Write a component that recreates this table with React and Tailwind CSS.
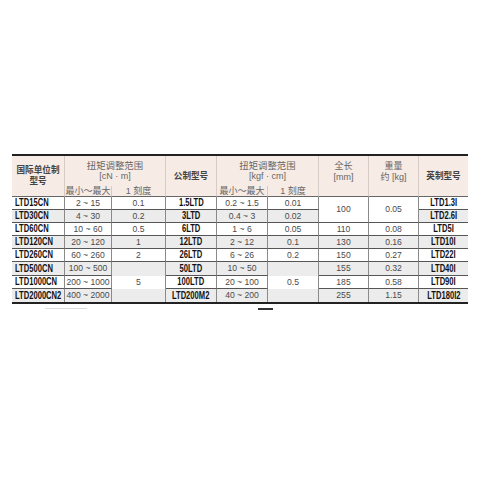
const cols = "grid-cols-[53px_47px_54px_51px_51px_51px_50px_50px_49px]";
const rowsTpl = "grid-rows-[30px_11px_13px_13px_13px_13px_13px_14px_13px_13px]";

const sans = { fontFamily: '"Liberation Sans", Arial, "Noto Sans CJK SC", sans-serif' };

// body data, one per row
const data = [
  { si: "LTD15CN", r1: "2 ~ 15", s1: "0.1", m: "1.5LTD", r2: "0.2 ~ 1.5", s2: "0.01", len: "100", w: "0.05", inch: "LTD1.3I" },
  { si: "LTD30CN", r1: "4 ~ 30", s1: "0.2", m: "3LTD", r2: "0.4 ~ 3", s2: "0.02", inch: "LTD2.6I" },
  { si: "LTD60CN", r1: "10 ~ 60", s1: "0.5", m: "6LTD", r2: "1 ~ 6", s2: "0.05", len: "110", w: "0.08", inch: "LTD5I" },
  { si: "LTD120CN", r1: "20 ~ 120", s1: "1", m: "12LTD", r2: "2 ~ 12", s2: "0.1", len: "130", w: "0.16", inch: "LTD10I" },
  { si: "LTD260CN", r1: "60 ~ 260", s1: "2", m: "26LTD", r2: "6 ~ 26", s2: "0.2", len: "150", w: "0.27", inch: "LTD22I" },
  { si: "LTD500CN", r1: "100 ~ 500", s1: "", m: "50LTD", r2: "10 ~ 50", s2: "", len: "155", w: "0.32", inch: "LTD40I" },
  { si: "LTD1000CN", r1: "200 ~ 1000", s1: "5", m: "100LTD", r2: "20 ~ 100", s2: "0.5", len: "185", w: "0.58", inch: "LTD90I" },
  { si: "LTD2000CN2", r1: "400 ~ 2000", s1: "", m: "LTD200M2", r2: "40 ~ 200", s2: "", len: "255", w: "1.15", inch: "LTD180I2" },
];

function Cell({ children, i, last, bold, left, noBottom, span, white }) {
  const shade = !white && i % 2 === 1 ? "bg-[#ececec]" : "bg-white";
  const bottom = i === 7 || noBottom ? "" : "border-b border-b-[#555]";
  const right = last ? "" : "border-r border-r-[#8a8a8a]";
  return (
    <div
      className={`${shade} ${bottom} ${right} ${span || ""} flex items-center ${left ? "justify-start pl-[3px]" : "justify-center"} ${bold ? "font-bold text-[#111] text-[10px]" : "text-[#4a4a4a] text-[8.6px]"} leading-none whitespace-nowrap`}
    >
      {bold ? (
        // the source uses a condensed bold face; squeeze Liberation Sans to match
        <span className={`inline-block scale-x-[0.76] ${left ? "origin-left" : "origin-center"}`}>{children}</span>
      ) : (
        children
      )}
    </div>
  );
}

function Head({ children, span, bold, shift, noRight }) {
  return (
    <div
      className={`bg-[#f6ebe5] ${noRight ? "" : "border-r border-r-[#d6cbc5]"} ${span || ""} flex flex-col items-center justify-center ${shift ? "pb-[9px]" : ""} ${bold ? "font-bold text-[#444] text-[8.6px]" : "text-[#666] text-[9px]"} leading-[11px] text-center whitespace-nowrap`}
    >
      {children}
    </div>
  );
}

export default function App() {
  return (
    <div className="w-[500px] h-[500px] bg-white pt-[154px] pl-[12px]" style={sans}>
      <div className={`grid ${cols} ${rowsTpl} w-[456px] border-t-2 border-t-[#222] border-b-2 border-b-[#222]`}>
        {/* header row 1 */}
        <Head span="row-span-2 border-b border-b-[#666]" bold>
          <span>国际单位制</span>
          <span>型号</span>
        </Head>
        <Head span="col-span-2">
          <span className="text-[9.4px]">扭矩调整范围</span>
          <span>[cN · m]</span>
        </Head>
        <Head span="row-span-2 border-b border-b-[#666]" bold>
          <span>公制型号</span>
        </Head>
        <Head span="col-span-2">
          <span className="text-[9.4px]">扭矩调整范围</span>
          <span>[kgf · cm]</span>
        </Head>
        <Head span="row-span-2 border-b border-b-[#666]" shift>
          <span>全长</span>
          <span>[mm]</span>
        </Head>
        <Head span="row-span-2 border-b border-b-[#666]" shift>
          <span>重量</span>
          <span>约 [kg]</span>
        </Head>
        <Head span="row-span-2 border-b border-b-[#666]" bold noRight>
          <span>英制型号</span>
        </Head>
        {/* header row 2 */}
        <Head span="border-b border-b-[#666]">
          <span>最小～最大</span>
        </Head>
        <Head span="border-b border-b-[#666]">
          <span>1 刻度</span>
        </Head>
        <Head span="border-b border-b-[#666]">
          <span>最小～最大</span>
        </Head>
        <Head span="border-b border-b-[#666]">
          <span>1 刻度</span>
        </Head>

        {data.map((d, i) => {
          const merged = i >= 5; // 5 / 0.5 cells without inner lines
          return [
            <Cell key={`a${i}`} i={i} bold left>{d.si}</Cell>,
            <Cell key={`b${i}`} i={i}>{d.r1}</Cell>,
            <Cell key={`c${i}`} i={i} noBottom={merged && i < 7}>{d.s1}</Cell>,
            <Cell key={`d${i}`} i={i} bold>{d.m}</Cell>,
            <Cell key={`e${i}`} i={i}>{d.r2}</Cell>,
            <Cell key={`f${i}`} i={i} noBottom={merged && i < 7}>{d.s2}</Cell>,
            d.len !== undefined ? (
              <Cell key={`g${i}`} i={i} span={i === 0 ? "row-span-2" : ""} white={i === 0}>{d.len}</Cell>
            ) : null,
            d.w !== undefined ? (
              <Cell key={`h${i}`} i={i} span={i === 0 ? "row-span-2" : ""} white={i === 0}>{d.w}</Cell>
            ) : null,
            <Cell key={`k${i}`} i={i} bold last>{d.inch}</Cell>,
          ];
        })}
      </div>

      {/* stray marks under the table */}
      <div className="flex items-start mt-[4px]">
        <div className="ml-[33px] w-[42px] h-px bg-[#dcdcdc]" />
        <div className="ml-[171px] w-[15px] h-[1.5px] bg-[#333]" />
      </div>
    </div>
  );
}
